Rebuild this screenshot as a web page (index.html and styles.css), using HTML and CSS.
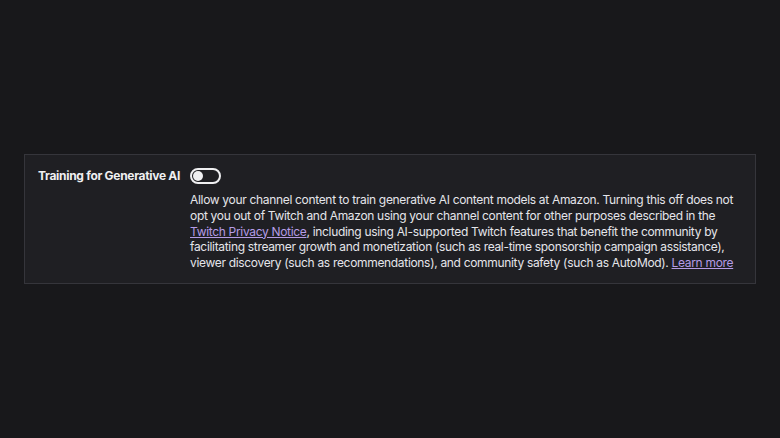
FILE: index.html
```html
<!DOCTYPE html>
<html lang="en">

<head>
    <meta charset="UTF-8" />
    <meta name="viewport" content="width=device-width, initial-scale=1.0" />
    <title>Channel settings – Generative AI</title>
    <link rel="stylesheet" href="styles.css">
</head>

<body>
    <!-- Training for generative AI setting -->
    <div class="setting">
        <div class="setting-label">Training for Generative AI</div>
        <div class="setting-body">
            <label class="toggle">
                <input type="checkbox">
                <span class="toggle-track"><span class="toggle-knob"></span></span>
            </label>
            <p class="setting-desc">
                Allow your channel content to train generative AI content models at Amazon. Turning this off does not
                opt you out of Twitch and Amazon using your channel content for other purposes described in the
                <a href="#" class="link">Twitch Privacy Notice</a>, including using AI-supported Twitch features that benefit the community by
                facilitating streamer growth and monetization (such as real-time sponsorship campaign assistance),
                viewer discovery (such as recommendations), and community safety (such as AutoMod). <a href="#" class="link">Learn more</a>
            </p>
        </div>
    </div>
</body>

</html>
```

FILE: styles.css
```css
/* page */
body {
    font-family: Inter, 'Noto Sans', sans-serif;
    margin: 0;
    padding: 154px 24px 0;
    background-color: #18181b;
    color: #efeff1;
}

/* setting card */
.setting {
    display: flex;
    align-items: flex-start;
    background-color: #1f1f23;
    border: 1px solid #35353b;
    padding: 10px 14px 12px 13px;
}

.setting-label {
    width: 152px;
    flex-shrink: 0;
    font-size: 12px;
    font-weight: 700;
    letter-spacing: -0.3px;
    line-height: 16px;
    padding-top: 3px;
}

.setting-body {
    flex: 1;
}

/* toggle switch */
.toggle {
    display: inline-block;
    cursor: pointer;
}

.toggle input {
    display: none;
}

.toggle-track {
    display: flex;
    align-items: center;
    width: 26px;
    height: 12px;
    border: 2px solid #efeff1;
    border-radius: 10px;
    padding: 0 0 0 1px;
}

.toggle-knob {
    width: 10px;
    height: 10px;
    border-radius: 50%;
    background-color: #efeff1;
}

.setting-desc {
    margin: 7px 0 0;
    font-size: 12px;
    letter-spacing: -0.32px;
    line-height: 15.75px;
    color: #e5e5ea;
}

.link {
    color: #b59ce6;
    text-decoration: underline;
}
```
